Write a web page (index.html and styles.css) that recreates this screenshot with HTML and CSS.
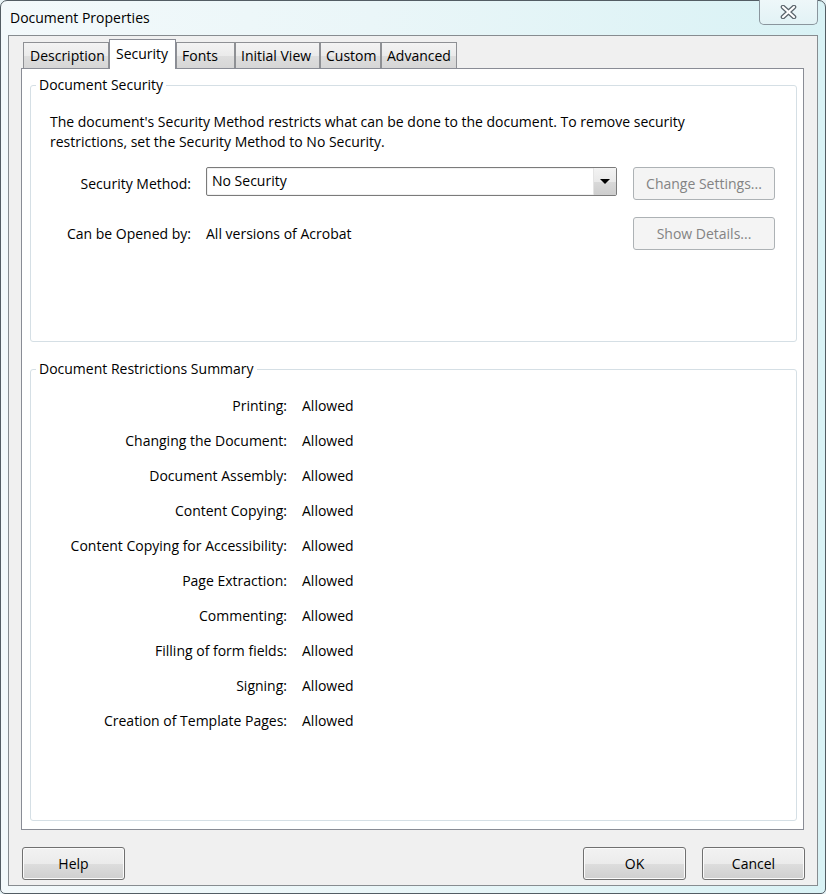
FILE: index.html
```html
<!DOCTYPE html>
<html>
<head>
<meta charset="utf-8">
<title>Document Properties</title>
<link rel="stylesheet" href="styles.css">
</head>
<body>
<div class="window">
  <div class="titlebar">
    <span class="title">Document Properties</span>
    <div class="close-btn">
      <svg width="17" height="14" viewBox="0 0 17 14">
        <path d="M3 2 L14 12 M14 2 L3 12" stroke="#59636b" stroke-width="4.6" stroke-linecap="round" fill="none"/>
        <path d="M3 2 L14 12 M14 2 L3 12" stroke="#ffffff" stroke-width="2.2" stroke-linecap="round" fill="none"/>
      </svg>
    </div>
  </div>
  <div class="client">
    <div class="tabs">
      <div class="tab t-desc">Description</div>
      <div class="tab t-sec selected">Security</div>
      <div class="tab t-fonts">Fonts</div>
      <div class="tab t-iv">Initial View</div>
      <div class="tab t-cust">Custom</div>
      <div class="tab t-adv">Advanced</div>
    </div>
    <div class="panel">
      <fieldset class="group group-security">
        <legend>Document Security</legend>
        <div class="sec-body">
          <p class="intro">The document's Security Method restricts what can be done to the document. To remove security<br>restrictions, set the Security Method to No Security.</p>
          <div class="sec-grid">
            <div class="lbl">Security Method:</div>
            <div class="select">
              <span class="select-text">No Security</span>
              <span class="select-arrow"><span class="tri"></span></span>
            </div>
            <div class="btn disabled">Change Settings...</div>
            <div class="lbl">Can be Opened by:</div>
            <div class="val">All versions of Acrobat</div>
            <div class="btn disabled">Show Details...</div>
          </div>
        </div>
      </fieldset>
      <fieldset class="group group-restr">
        <legend>Document Restrictions Summary</legend>
        <div class="restr-grid">
          <div class="rl">Printing:</div><div class="rv">Allowed</div>
          <div class="rl">Changing the Document:</div><div class="rv">Allowed</div>
          <div class="rl">Document Assembly:</div><div class="rv">Allowed</div>
          <div class="rl">Content Copying:</div><div class="rv">Allowed</div>
          <div class="rl">Content Copying for Accessibility:</div><div class="rv">Allowed</div>
          <div class="rl">Page Extraction:</div><div class="rv">Allowed</div>
          <div class="rl">Commenting:</div><div class="rv">Allowed</div>
          <div class="rl">Filling of form fields:</div><div class="rv">Allowed</div>
          <div class="rl">Signing:</div><div class="rv">Allowed</div>
          <div class="rl">Creation of Template Pages:</div><div class="rv">Allowed</div>
        </div>
      </fieldset>
    </div>
    <div class="footer">
      <div class="btn push help">Help</div>
      <div class="right-btns">
        <div class="btn push">OK</div>
        <div class="btn push">Cancel</div>
      </div>
    </div>
  </div>
</div>
</body>
</html>
```
FILE: styles.css
```css
* { box-sizing: border-box; }
html, body {
  margin: 0;
  padding: 0;
  width: 826px;
  height: 894px;
  overflow: hidden;
  background: #e9f4f7;
}
body {
  font-family: "Open Sans", "Noto Sans", "Liberation Sans", sans-serif;
  font-size: 14px;
  color: #000;
}
.window {
  width: 826px;
  height: 894px;
  border: 1px solid #535d64;
  border-radius: 7px 7px 5px 5px;
  background: linear-gradient(to right, #f3f9fb 0%, #eaf6f8 45%, #d9f2f5 100%);
  display: flex;
  flex-direction: column;
}
.titlebar {
  height: 34px;
  display: flex;
  align-items: flex-start;
  padding-left: 9px;
  padding-right: 7px;
}
.title {
  font-size: 14px;
  line-height: 34px;
  color: #000;
}
.close-btn {
  margin-left: auto;
  margin-top: -1px;
  width: 59px;
  height: 25px;
  border: 1px solid #8a959d;
  border-top: none;
  border-radius: 0 0 5px 5px;
  background: linear-gradient(#eef7f9, #e2f2f5);
  display: flex;
  align-items: center;
  justify-content: center;
}
.client {
  margin: 0 7px 7px 7px;
  height: 851px;
  border: 1px solid #878c90;
  background: #f0f0f0;
  padding: 3px 13px 5px 12px;
  display: flex;
  flex-direction: column;
}
.tabs {
  display: flex;
  align-items: flex-end;
  height: 29px;
  padding-left: 2px;
  position: relative;
  z-index: 2;
}
.tab {
  height: 26px;
  border: 1px solid #8e9094;
  border-bottom: none;
  background: linear-gradient(#f3f3f3 0%, #ebebeb 50%, #dedede 51%, #d6d6d6 100%);
  line-height: 25px;
  padding-left: 5px;
  font-size: 14px;
  white-space: nowrap;
}
.tab.selected {
  height: 30px;
  background: #fff;
  line-height: 27px;
  margin-bottom: -1px;
  padding-left: 6px;
  border-color: #898c95;
}
.t-desc { width: 86px; padding-left: 6px; }
.t-sec { width: 67px; }
.t-fonts { width: 59px; }
.t-iv { width: 85px; }
.t-cust { width: 61px; }
.t-adv { width: 76px; }
.panel {
  flex: 1;
  border: 1px solid #898c95;
  background: #fff;
  display: flex;
  flex-direction: column;
  padding: 0 6px 8px 8px;
  position: relative;
  z-index: 1;
}
.group {
  margin: 0;
  padding: 0;
  border: 1px solid #d5dfe5;
  border-radius: 3px;
  min-inline-size: 0;
}
.group legend {
  margin-left: 5px;
  padding: 0 3px;
  line-height: 20px;
  font-size: 14px;
}
.group-security {
  margin-top: 6px;
  height: 267px;
}
.sec-body {
  padding-left: 19px;
}
.intro {
  margin: 17px 0 0 0;
  line-height: 20px;
  font-size: 14px;
}
.sec-grid {
  margin-top: 15px;
  display: grid;
  grid-template-columns: 141px 411px 143px;
  grid-template-rows: 33px 33px;
  column-gap: 15px;
  row-gap: 17px;
  align-items: center;
}
.lbl {
  text-align: right;
}
.select {
  align-self: start;
  height: 29px;
  border: 1px solid #7b7b7b;
  border-radius: 2px;
  box-shadow: inset 0 0 0 1px #f1f1f1;
  display: flex;
  background: #fff;
}
.select-text {
  flex: 1;
  padding-left: 5px;
  line-height: 26px;
}
.select-arrow {
  width: 23px;
  background: linear-gradient(#f3f3f3 0%, #e9e9e9 50%, #d9d9d9 51%, #cdcdcd 100%);
  border-left: 1px solid #e4e4e4;
  display: flex;
  align-items: center;
  justify-content: center;
}
.tri {
  width: 0;
  height: 0;
  border-left: 5px solid transparent;
  border-right: 5px solid transparent;
  border-top: 5px solid #000;
}
.btn {
  height: 33px;
  border-radius: 3px;
  display: flex;
  align-items: center;
  justify-content: center;
  font-size: 14px;
}
.btn.disabled {
  margin-left: 1px;
  border: 1px solid #adb2b5;
  background: #f4f4f4;
  color: #838383;
}
.group-restr {
  margin-top: 17px;
  flex: 1;
}
.restr-grid {
  margin-top: 9px;
  display: grid;
  grid-template-columns: 256px auto;
  grid-auto-rows: 35px;
  column-gap: 15px;
  align-items: center;
}
.rl {
  text-align: right;
}
.footer {
  margin-top: 17px;
  margin-right: -1px;
  display: flex;
  justify-content: space-between;
  padding-left: 1px;
}
.right-btns {
  display: flex;
  gap: 16px;
}
.btn.push {
  width: 103px;
  border: 1px solid #707070;
  background: linear-gradient(#f2f2f2 0%, #ebebeb 50%, #dddddd 51%, #cfcfcf 100%);
  box-shadow: inset 0 0 0 1px #fbfbfb;
  color: #000;
}
```
